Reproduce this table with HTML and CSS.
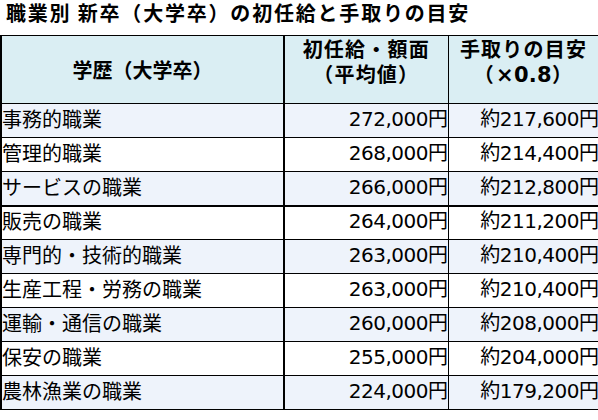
FILE: index.html
```html
<!DOCTYPE html>
<html lang="ja">
<head>
<meta charset="utf-8">
<link rel="stylesheet" href="styles.css">
</head>
<body>
<div class="title">職業別 新卒（大学卒）の初任給と手取りの目安</div>
<table class="salary">
  <colgroup>
    <col class="c1"><col class="c2"><col class="c3">
  </colgroup>
  <thead>
    <tr>
      <th class="h-mid">学歴（大学卒）</th>
      <th class="h-top">初任給・額面<br>（平均値）</th>
      <th class="h-top">手取りの目安<br>（<span class="ratio">×0.8</span>）</th>
    </tr>
  </thead>
  <tbody>
    <tr class="alt"><td class="job">事務的職業</td><td class="num n2">272,000円</td><td class="num n3">約217,600円</td></tr>
    <tr><td class="job">管理的職業</td><td class="num n2">268,000円</td><td class="num n3">約214,400円</td></tr>
    <tr class="alt"><td class="job">サービスの職業</td><td class="num n2">266,000円</td><td class="num n3">約212,800円</td></tr>
    <tr class="sep"><td class="job">販売の職業</td><td class="num n2">264,000円</td><td class="num n3">約211,200円</td></tr>
    <tr class="alt"><td class="job">専門的・技術的職業</td><td class="num n2">263,000円</td><td class="num n3">約210,400円</td></tr>
    <tr><td class="job">生産工程・労務の職業</td><td class="num n2">263,000円</td><td class="num n3">約210,400円</td></tr>
    <tr class="alt"><td class="job">運輸・通信の職業</td><td class="num n2">260,000円</td><td class="num n3">約208,000円</td></tr>
    <tr><td class="job">保安の職業</td><td class="num n2">255,000円</td><td class="num n3">約204,000円</td></tr>
    <tr class="alt"><td class="job">農林漁業の職業</td><td class="num n2">224,000円</td><td class="num n3">約179,200円</td></tr>
  </tbody>
</table>
</body>
</html>
```
FILE: styles.css
```css
html, body {
  margin: 0;
  padding: 0;
  background: #ffffff;
}
body {
  width: 598px;
  height: 420px;
  overflow: hidden;
  font-family: "DejaVu Sans", "Noto Sans CJK JP", sans-serif;
  color: #000;
}
.title {
  height: 35px;
  box-sizing: border-box;
  padding-left: 6px;
  font-family: "Noto Sans CJK JP", sans-serif;
  font-weight: bold;
  font-size: 20px;
  line-height: 26px;
  letter-spacing: 1.8px;
  white-space: nowrap;
}
.salary {
  width: 598px;
  border-collapse: collapse;
  table-layout: fixed;
  font-size: 20px;
}
.c1 { width: 283px; }
.c2 { width: 164px; }
.c3 { width: 151px; }
.salary th,
.salary td {
  border: 1px solid #000;
  padding: 0;
  white-space: nowrap;
}
.salary th {
  background: #daeef3;
  font-family: "Noto Sans CJK JP", sans-serif;
  font-weight: bold;
  font-size: 20px;
  line-height: 25px;
  height: 67px;
  text-align: center;
}
.salary th.h-top { letter-spacing: 1.2px; }
.ratio {
  font-family: "DejaVu Sans", sans-serif;
  font-size: 21px;
  letter-spacing: 0.3px;
  padding-left: 1px;
}
.salary th:first-child,
.salary td:first-child {
  border-left-width: 2px;
  border-right-width: 2px;
}
.h-mid { vertical-align: middle; }
.h-top { vertical-align: top; }
.salary td {
  height: 34px;
  line-height: 24px;
  vertical-align: middle;
  padding-bottom: 3px;
  box-sizing: border-box;
}
.salary tr.alt td { background: #eef3fb; }
.salary tr.sep td { border-top-width: 2px; }
.job {
  padding-left: 4px;
  font-family: "Noto Sans CJK JP", sans-serif;
  font-size: 20px;
}
.num {
  text-align: right;
  letter-spacing: -0.5px;
}
.n2 { padding-right: 8px; }
.n3 { padding-right: 12px; }
```
